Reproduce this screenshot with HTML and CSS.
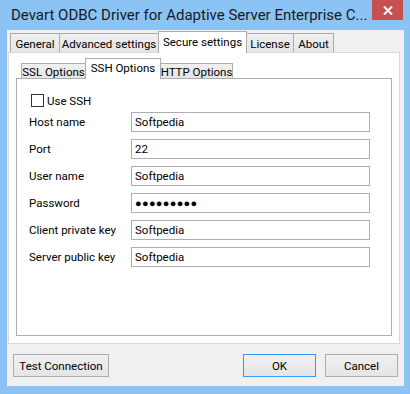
FILE: index.html
```html
<!DOCTYPE html>
<html lang="en">
  <head>
    <meta charset="UTF-8" />
    <title>Devart ODBC Driver for Adaptive Server Enterprise</title>
    <link rel="stylesheet" href="styles.css">
  </head>
  <body>
    <div class="window">
      <div class="titlebar">
        <span class="title">Devart ODBC Driver for Adaptive Server Enterprise C...</span>
        <div class="close">
          <svg width="10" height="9" viewBox="0 0 10 9">
            <path d="M1 0.5 L9 8.5 M9 0.5 L1 8.5" stroke="#fff" stroke-width="2" />
          </svg>
        </div>
      </div>

      <div class="client">
        <div class="tabctl">
          <div class="tabstrip">
            <div class="tab tab-general">General</div>
            <div class="tab tab-advanced">Advanced settings</div>
            <div class="tab tab-secure active">Secure settings</div>
            <div class="tab tab-license">License</div>
            <div class="tab tab-about">About</div>
          </div>

          <div class="panel">
            <div class="tabstrip sub">
              <div class="tab tab-ssl">SSL Options</div>
              <div class="tab tab-ssh active">SSH Options</div>
              <div class="tab tab-http">HTTP Options</div>
            </div>

            <div class="subpanel">
              <label class="check-row">
                <input type="checkbox" class="check" />
                <span>Use SSH</span>
              </label>

              <div class="fields">
                <label class="field">
                  <span>Host name</span>
                  <input type="text" value="Softpedia" />
                </label>
                <label class="field">
                  <span>Port</span>
                  <input type="text" value="22" />
                </label>
                <label class="field">
                  <span>User name</span>
                  <input type="text" value="Softpedia" />
                </label>
                <label class="field">
                  <span>Password</span>
                  <input type="text" class="dots" value="●●●●●●●●●" />
                </label>
                <label class="field">
                  <span>Client private key</span>
                  <input type="text" value="Softpedia" />
                </label>
                <label class="field">
                  <span>Server public key</span>
                  <input type="text" value="Softpedia" />
                </label>
              </div>
            </div>
          </div>
        </div>

        <div class="buttons">
          <button class="btn btn-test">Test Connection</button>
          <button class="btn btn-ok">OK</button>
          <button class="btn btn-cancel">Cancel</button>
        </div>
      </div>
    </div>
  </body>
</html>
```

FILE: styles.css
```css
*,
*::before,
*::after {
  box-sizing: border-box;
  margin: 0;
  padding: 0;
  font-family: Roboto, "Liberation Sans", sans-serif;
  font-size: 11.5px;
  color: #000;
}
body {
  width: 410px;
  height: 394px;
  overflow: hidden;
}

.window {
  width: 410px;
  height: 394px;
  background-color: #8bc3f4;
  display: flex;
  flex-direction: column;
}
.titlebar {
  height: 30px;
  flex-shrink: 0;
  display: flex;
  justify-content: space-between;
  align-items: flex-start;
}
.title {
  padding: 6px 0 0 11px;
  font-size: 15px;
  color: #1a1a1a;
  white-space: nowrap;
}
.close {
  width: 31px;
  height: 20px;
  margin-right: 7px;
  background-color: #c75050;
  display: flex;
  align-items: center;
  justify-content: center;
}

.client {
  flex: 1;
  margin: 0 6px 8px 7px;
  padding: 1px 4px 9px 1px;
  background-color: #f0f0f0;
  display: flex;
  flex-direction: column;
}
.tabctl {
  flex: 1;
  display: flex;
  flex-direction: column;
}
.tabstrip {
  height: 21px;
  flex-shrink: 0;
  padding-left: 2px;
  display: flex;
  align-items: flex-end;
}
.tab {
  height: 19px;
  margin-right: -1px;
  padding-top: 1px;
  border: 1px solid #acacac;
  border-bottom: 0;
  background: linear-gradient(#f0f0f0, #e5e5e5);
  display: flex;
  align-items: center;
  justify-content: center;
  white-space: nowrap;
}
.tab.active {
  height: 22px;
  padding-top: 0;
  padding-bottom: 2px;
  margin-bottom: -1px;
  background: #fff;
  position: relative;
  z-index: 1;
}
.tab-general { width: 50px; }
.tab-advanced { width: 100px; }
.tab-secure { width: 89px; }
.tab-license { width: 48px; }
.tab-about { width: 41px; }

.panel {
  flex: 1;
  background-color: #fff;
  border: 1px solid #d9d9d9;
  padding: 5px 7px 7px 7px;
  display: flex;
  flex-direction: column;
}
.tabstrip.sub {
  height: 20px;
  padding-left: 5px;
}
.tabstrip.sub .tab {
  height: 15px;
  padding-top: 1px;
}
.tabstrip.sub .tab.active {
  height: 21px;
  padding-top: 0;
  padding-bottom: 3px;
}
.tab-ssl { width: 65px; }
.tab-ssh { width: 76px; }
.tab-http { width: 73px; }

.subpanel {
  flex: 1;
  border: 1px solid #adadad;
  padding: 15px 12px 0 12px;
  display: flex;
  flex-direction: column;
}
.check-row {
  display: flex;
  align-items: center;
  gap: 3px;
  margin-left: 2px;
  height: 13px;
}
.check {
  appearance: none;
  width: 13px;
  height: 13px;
  border: 1px solid #333;
  background: #fff;
}
.fields {
  margin-top: 5px;
  display: flex;
  flex-direction: column;
  gap: 7px;
}
.field {
  display: flex;
  align-items: center;
}
.field span {
  width: 102px;
}
.field input {
  width: 239px;
  height: 20px;
  border: 1px solid #abadb3;
  padding: 0 3px;
  outline: none;
}
.field input.dots {
  font-size: 11px;
  letter-spacing: 0.3px;
}

.buttons {
  flex-shrink: 0;
  margin-top: 10px;
  padding: 0 0 0 5px;
  display: flex;
  align-items: center;
}
.btn {
  height: 23px;
  border: 1px solid #acacac;
  background: linear-gradient(#f0f0f0, #e5e5e5);
  cursor: pointer;
}
.btn-test {
  width: 96px;
  margin-right: auto;
}
.btn-ok {
  width: 73px;
  border-color: #3399ff;
  margin-right: 9px;
}
.btn-cancel {
  width: 73px;
  margin-right: 2px;
}
```
